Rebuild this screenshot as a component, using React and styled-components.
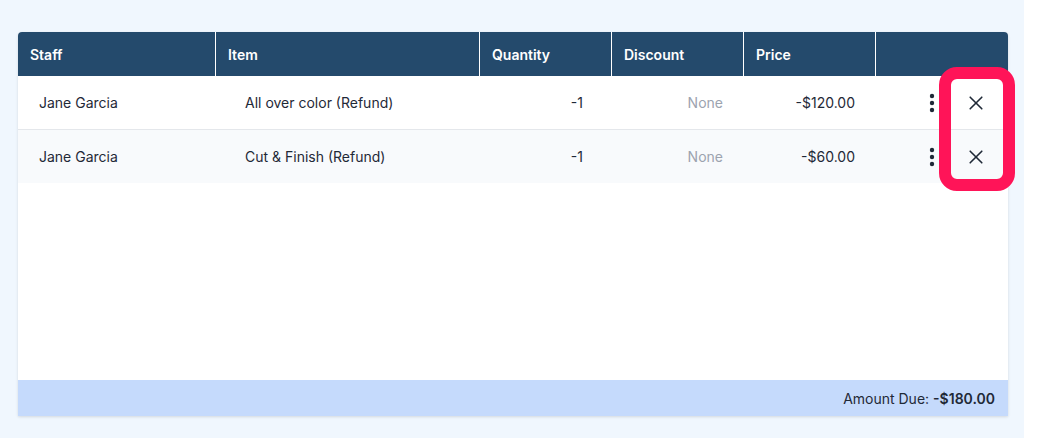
import React from "react";
import styled, { createGlobalStyle } from "styled-components";

const Global = createGlobalStyle`
  html, body { margin: 0; padding: 0; background: #ffffff; }
  body { font-family: Inter, "Noto Sans", sans-serif; }
  * { box-sizing: border-box; }
`;

const Page = styled.div`
  width: 1024px;
  min-height: 438px;
  background: #f0f7fe;
  padding: 32px 16px 0 18px;
`;

const Card = styled.div`
  position: relative;
  width: 990px;
  height: 384px;
  background: #ffffff;
  border-radius: 4px 4px 0 0;
  box-shadow: 0 1px 3px rgba(0, 0, 0, 0.12);
  display: flex;
  flex-direction: column;
`;

const Grid = styled.div`
  display: grid;
  grid-template-columns: 198px 264px 132px 132px 132px 132px;
`;

const HeadRow = styled(Grid)`
  height: 44px;
  background: #244a6c;
  border-radius: 4px 4px 0 0;
`;

const HeadCell = styled.div`
  display: flex;
  align-items: center;
  padding-left: 12px;
  color: #ffffff;
  font-size: 14px;
  font-weight: 600;
  border-right: ${(p) => (p.$last ? "none" : "1px solid #ffffff")};
`;

const BodyRow = styled(Grid)`
  height: ${(p) => (p.$last ? "53px" : "54px")};
  background: ${(p) => (p.$alt ? "#f8fafc" : "#ffffff")};
  border-bottom: ${(p) => (p.$last ? "none" : "1px solid #e4e7eb")};
`;

const Cell = styled.div`
  display: flex;
  align-items: center;
  justify-content: ${(p) => (p.$right ? "flex-end" : "flex-start")};
  padding-left: ${(p) => p.$pl || 0}px;
  padding-right: ${(p) => p.$pr || 0}px;
  font-size: 14px;
  color: ${(p) => (p.$muted ? "#9ca3af" : "#1f2937")};
`;

const Actions = styled.div`
  display: flex;
  align-items: center;
  padding-left: 53px;
  gap: 34px;
`;

const IconBtn = styled.button`
  border: none;
  background: transparent;
  padding: 0;
  display: flex;
  align-items: center;
  justify-content: center;
  color: #1f2937;
  cursor: pointer;
`;

const Spacer = styled.div`
  flex: 1;
`;

const Footer = styled.div`
  height: 36px;
  background: #c5dafc;
  display: flex;
  align-items: center;
  justify-content: flex-end;
  padding-right: 13px;
  font-size: 14px;
  color: #1f2937;
`;

const Strong = styled.span`
  font-weight: 600;
  margin-left: 4px;
`;

const Highlight = styled.div`
  position: absolute;
  left: 921px;
  top: 35px;
  width: 76px;
  height: 124px;
  border: 12px solid #ff1458;
  border-radius: 18px;
  pointer-events: none;
`;

const Kebab = () => (
  <svg width="6" height="20" viewBox="0 0 6 20">
    <circle cx="3" cy="3" r="2.2" fill="#1f2937" />
    <circle cx="3" cy="10" r="2.2" fill="#1f2937" />
    <circle cx="3" cy="17" r="2.2" fill="#1f2937" />
  </svg>
);

const Close = () => (
  <svg width="14" height="14" viewBox="0 0 14 14">
    <path d="M1.2 1.2 L12.8 12.8 M12.8 1.2 L1.2 12.8" stroke="#1f2937" strokeWidth="1.6" strokeLinecap="round" />
  </svg>
);

const rows = [
  { staff: "Jane Garcia", item: "All over color (Refund)", qty: "-1", discount: "None", price: "-$120.00" },
  { staff: "Jane Garcia", item: "Cut & Finish (Refund)", qty: "-1", discount: "None", price: "-$60.00" },
];

const headers = ["Staff", "Item", "Quantity", "Discount", "Price", ""];

export default function App() {
  return (
    <>
      <Global />
      <Page>
        <Card>
          <HeadRow>
            {headers.map((h, i) => (
              <HeadCell key={i} $last={i === headers.length - 1}>
                {h}
              </HeadCell>
            ))}
          </HeadRow>
          {rows.map((r, i) => (
            <BodyRow key={i} $alt={i % 2 === 1} $last={i === rows.length - 1}>
              <Cell $pl={21}>{r.staff}</Cell>
              <Cell $pl={29}>{r.item}</Cell>
              <Cell $right $pr={29}>{r.qty}</Cell>
              <Cell $right $pr={21} $muted>{r.discount}</Cell>
              <Cell $right $pr={21}>{r.price}</Cell>
              <Actions>
                <IconBtn aria-label="More"><Kebab /></IconBtn>
                <IconBtn aria-label="Remove"><Close /></IconBtn>
              </Actions>
            </BodyRow>
          ))}
          <Spacer />
          <Footer>
            Amount Due:<Strong>-$180.00</Strong>
          </Footer>
          <Highlight />
        </Card>
      </Page>
    </>
  );
}
